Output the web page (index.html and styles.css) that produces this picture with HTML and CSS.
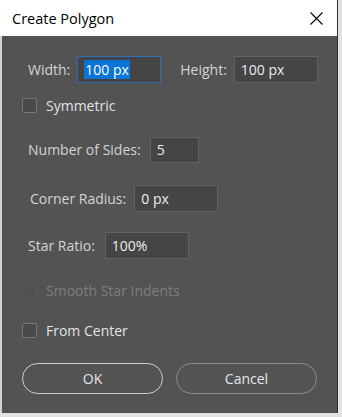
FILE: index.html
```html
<!DOCTYPE html>
<html lang="en">

<head>
    <meta charset="UTF-8">
    <meta name="viewport" content="width=device-width, initial-scale=1.0">
    <title>Create Polygon</title>
    <link rel="stylesheet" href="styles.css">
</head>

<body>
<div class="window">
    <div class="titlebar">
        <span class="title">Create Polygon</span>
        <svg class="close" width="13" height="13" viewBox="0 0 13 13">
            <path d="M0.5 0.5 L12.5 12.5 M12.5 0.5 L0.5 12.5" stroke="#000" stroke-width="1.1" fill="none"/>
        </svg>
    </div>

    <div class="content">
        <div class="row size-row">
            <label class="label" for="width">Width:</label>
            <div class="field focused w-width" id="width"><span class="selected">100 px</span></div>
            <label class="label height-label" for="height">Height:</label>
            <div class="field w-height" id="height">100 px</div>
        </div>

        <div class="check-row symmetric">
            <span class="box"></span>
            <span class="check-text">Symmetric</span>
        </div>

        <div class="row sides-row">
            <label class="label">Number of Sides:</label>
            <div class="field w-sides">5</div>
        </div>

        <div class="row radius-row">
            <label class="label">Corner Radius:</label>
            <div class="field w-radius">0 px</div>
        </div>

        <div class="row ratio-row">
            <label class="label">Star Ratio:</label>
            <div class="field w-ratio">100%</div>
        </div>

        <div class="check-row smooth disabled">
            <span class="box"></span>
            <span class="check-text">Smooth Star Indents</span>
        </div>

        <div class="check-row center">
            <span class="box"></span>
            <span class="check-text">From Center</span>
        </div>

        <div class="buttons">
            <button class="btn btn-ok" type="button">OK</button>
            <button class="btn btn-cancel" type="button">Cancel</button>
        </div>
    </div>
</div>
</body>

</html>
```

FILE: styles.css
```css
body {
    margin: 0;
    background: #e2e2e2;
    font-family: "Open Sans", "Noto Sans", sans-serif;
    font-size: 14px;
}

.window {
    width: 337px;
    height: 413px;
    border-right: 1px solid #2e2e2e;
    background: #535353;
    display: flex;
    flex-direction: column;
}

.titlebar {
    height: 36px;
    flex-shrink: 0;
    background: #fff;
    display: flex;
    align-items: center;
    justify-content: space-between;
    padding: 0 14px 0 12px;
}

.title {
    color: #000;
    font-size: 14.5px;
}

.close {
    display: block;
    margin-top: 1px;
}

.content {
    flex: 1;
    border-left: 2px solid #d3d3d3;
    display: flex;
    flex-direction: column;
}

.row {
    display: flex;
    align-items: center;
    height: 27px;
}

.label {
    color: #d4d4d4;
    margin-right: 8px;
}

.field {
    box-sizing: border-box;
    height: 27px;
    background: #454545;
    border: 1px solid #626262;
    color: #ececec;
    font-size: 14px;
    display: flex;
    align-items: center;
    padding-left: 6px;
}

.focused {
    border-color: #2f6db8;
}

.selected {
    background: #0a74d6;
    color: #fff;
    padding: 0 1px;
    line-height: 19px;
}

.size-row {
    margin-top: 20px;
    padding-left: 26px;
}

.size-row .label { margin-right: 7px; }

.w-width { width: 84px; }
.w-height { width: 84px; }
.w-sides { width: 49px; height: 26px; }
.w-radius { width: 84px; }
.w-ratio { width: 84px; }

.size-row .height-label {
    margin-left: 19px;
    margin-right: 7px;
}

.check-row {
    display: flex;
    align-items: center;
    padding-left: 20px;
    height: 16px;
}

.box {
    box-sizing: border-box;
    width: 15px;
    height: 15px;
    border: 1px solid #767676;
    border-radius: 2px;
    background: #4a4a4a;
    margin-right: 9px;
}

.check-text {
    color: #e2e2e2;
    font-size: 14px;
}

.disabled .box {
    border-color: #595959;
    background: #515151;
}

.disabled .check-text {
    color: #7e7e7e;
}

.symmetric { margin-top: 14px; }

.sides-row { margin-top: 23px; padding-left: 26px; }
.sides-row .label { margin-right: 9px; }
.radius-row { margin-top: 22px; padding-left: 28px; }
.ratio-row { margin-top: 20px; padding-left: 26px; }
.ratio-row .label { margin-right: 10px; }

.smooth { margin-top: 23px; }
.center { margin-top: 24px; }

.buttons {
    display: flex;
    gap: 13px;
    padding-left: 20px;
    margin-top: 25px;
}

.btn {
    width: 141px;
    height: 31px;
    border-radius: 16px;
    background: transparent;
    color: #e6e6e6;
    font-family: "Open Sans", "Noto Sans", sans-serif;
    font-size: 14px;
    padding: 0;
}

.btn-ok {
    border: 1.5px solid #cfcfcf;
}

.btn-cancel {
    border: 1px solid #8c8c8c;
}
```
